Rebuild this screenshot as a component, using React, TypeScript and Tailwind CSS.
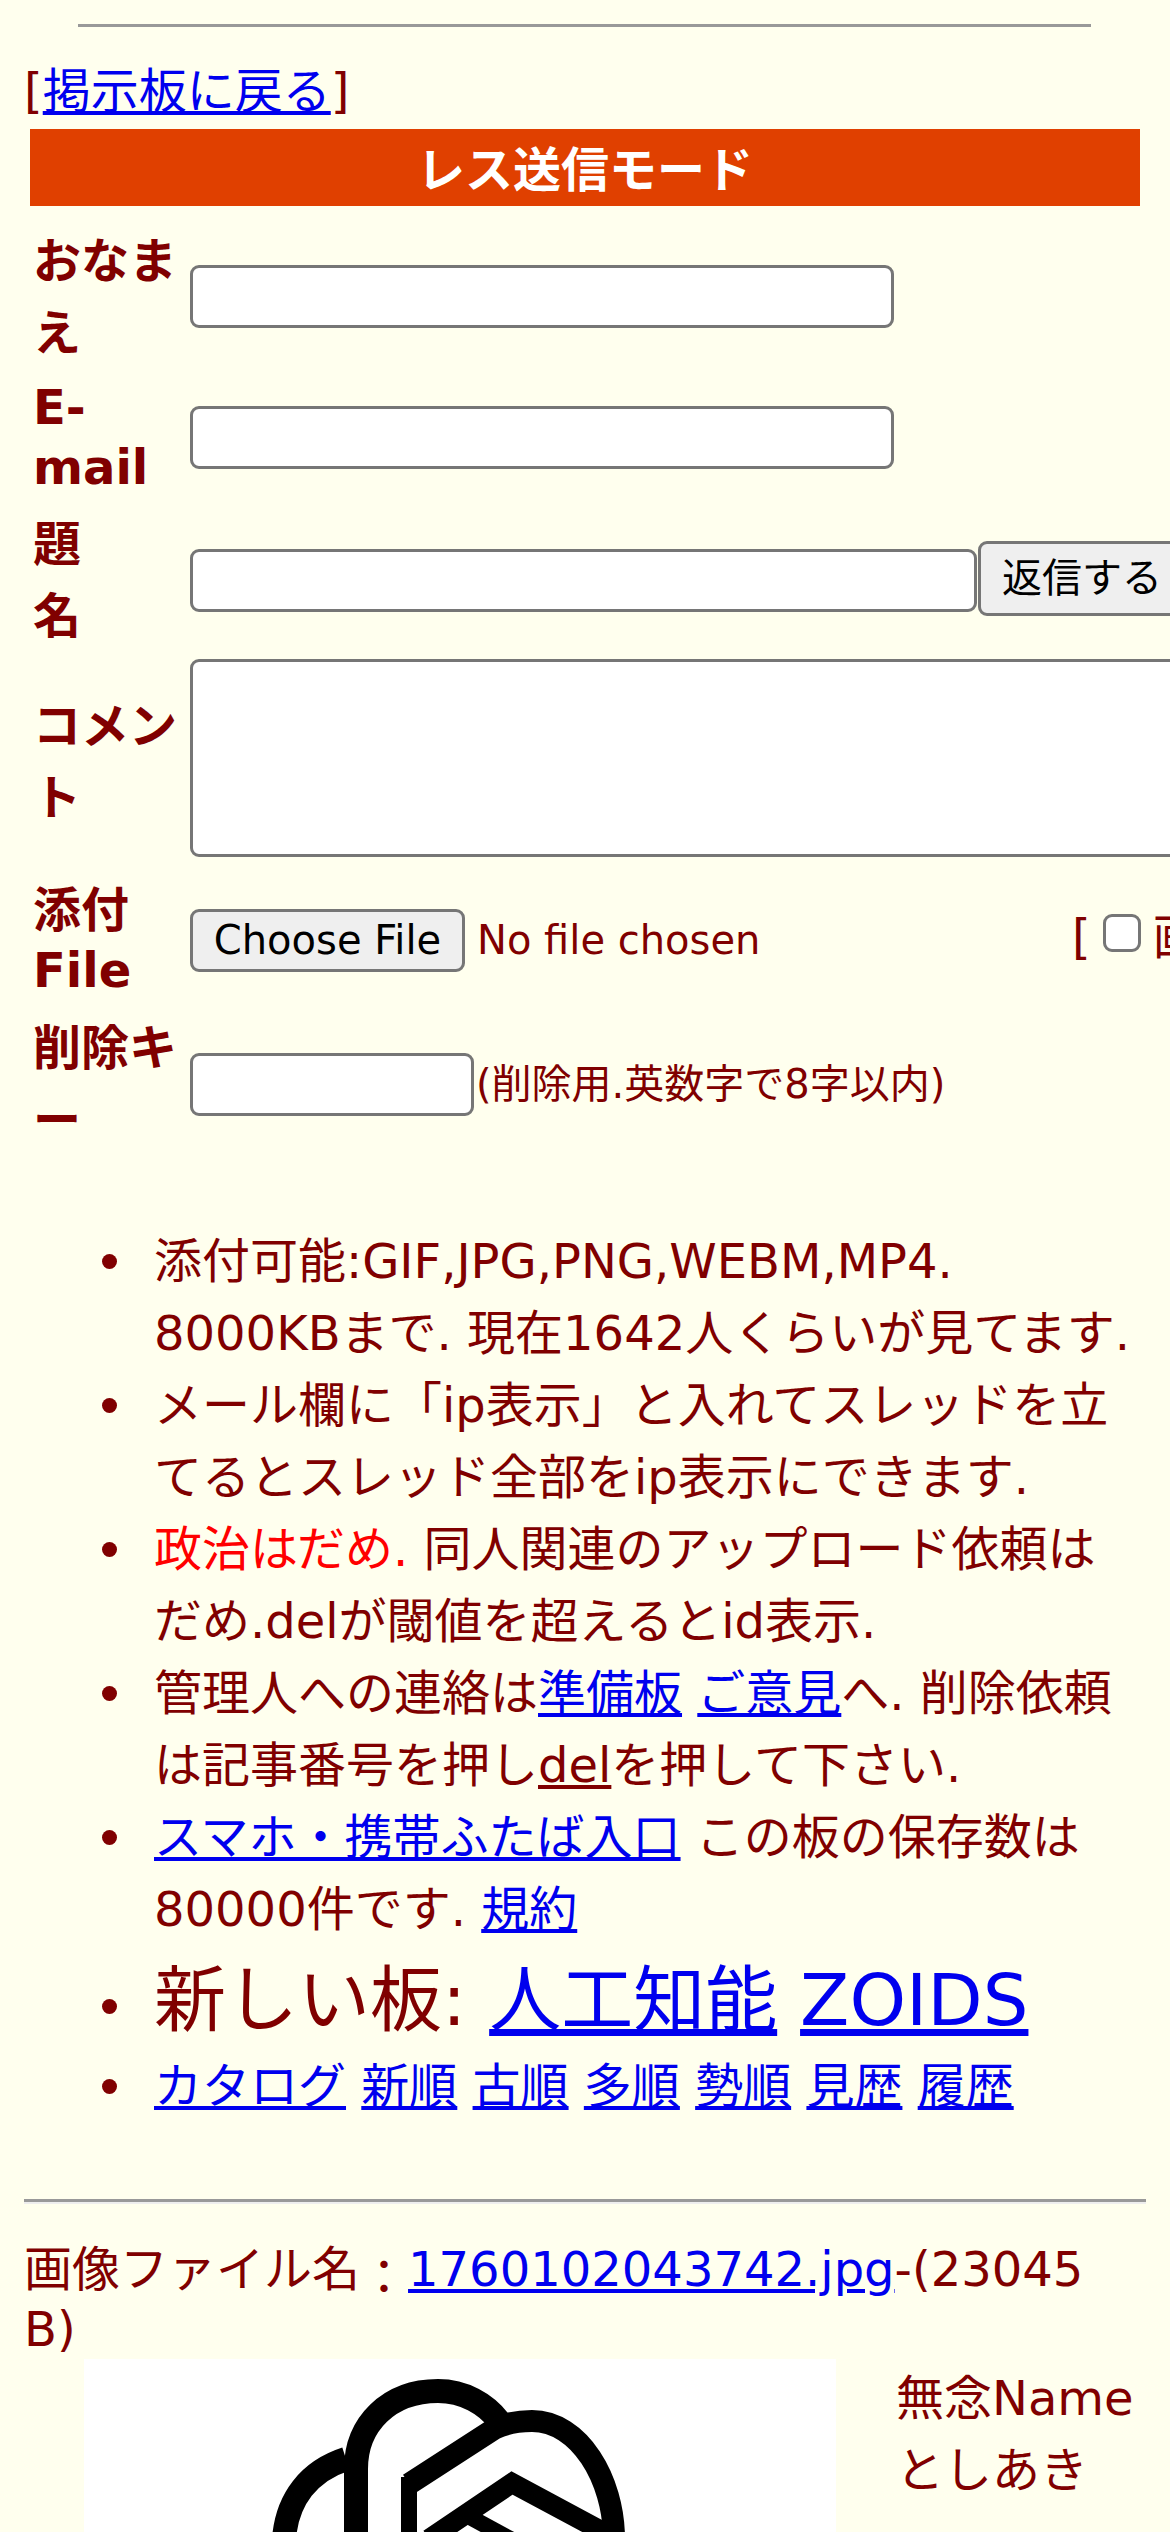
const font = { fontFamily: '"DejaVu Sans","Noto Sans CJK JP",sans-serif' };

function Row({ label, h, children }: { label: React.ReactNode; h: string; children?: React.ReactNode }) {
  return (
    <div className={`flex items-center ${h}`}>
      <div className="w-[160px] shrink-0 pl-[3px] font-bold break-all">{label}</div>
      {children}
    </div>
  );
}

const inputCls = "block h-[63px] rounded-[9px] border-[3px] border-[#767676] bg-white shrink-0";

function A({ children }: { children: React.ReactNode }) {
  return <a className="text-[#0000ee] underline">{children}</a>;
}

function Li({ children, className = "", dot = "mt-[29px]" }: { children: React.ReactNode; className?: string; dot?: string }) {
  return (
    <li className={`flex ${className}`}>
      <span className={`block w-[15px] h-[15px] rounded-full bg-[#800000] shrink-0 ml-[102px] mr-[37px] ${dot}`} />
      <div className="min-w-0">{children}</div>
    </li>
  );
}

export default function App() {
  return (
    <div className="w-[1170px] h-[2532px] overflow-hidden bg-[#ffffee] text-[#800000] text-[48px]" style={font}>
      <div className="pt-[24px] pl-[78px]">
        <div className="w-[1013px] h-[3px] bg-[#999999]" />
      </div>
      <div className="mt-[28px] pl-[24px] h-[74px] leading-[72px]">[<A>掲示板に戻る</A>]</div>
      <div className="ml-[30px] w-[1110px] h-[77px] bg-[#e04000] text-white font-bold text-center leading-[83px]">レス送信モード</div>
      <div className="ml-[30px] mt-[18px] w-[1200px]">
        <Row h="h-[144px]" label={<div className="leading-[72px] mt-[2px]">おなま<br />え</div>}>
          <div className={`${inputCls} w-[704px]`} />
        </Row>
        <Row h="h-[140px] -mt-[1px]" label={<div className="leading-[60px]">E-<br />mail</div>}>
          <div className={`${inputCls} w-[704px]`} />
        </Row>
        <Row h="h-[148px] -mt-[1px]" label={<div className="leading-[72px]">題<br />名</div>}>
          <div className={`${inputCls} w-[787px]`} />
          <div className="h-[75px] w-[300px] -mt-[4px] ml-[1px] rounded-[9px] border-[3px] border-[#767676] bg-[#efefef] text-black text-[40px] leading-[69px] pl-[21px] shrink-0">返信する</div>
        </Row>
        <Row h="h-[198px] mt-[5px]" label={<div className="leading-[72px] mt-[8px]">コメン<br />ト</div>}>
          <div className="h-[198px] w-[1100px] rounded-[9px] border-[3px] border-[#767676] bg-white shrink-0" />
        </Row>
        <Row h="h-[144px] mt-[11px]" label={<div className="leading-[60px]">添付<br />File</div>}>
          <div className="flex items-center w-[882px] shrink-0 text-[40px]">
            <div className="h-[63px] w-[275px] rounded-[9px] border-[3px] border-[#767676] bg-[#efefef] text-black leading-[57px] text-center shrink-0">Choose File</div>
            <div className="ml-[12px]">No file chosen</div>
          </div>
          <div className="flex items-center whitespace-nowrap -mt-[6px]">
            <span>[</span>
            <span className="ml-[12px] block w-[38px] h-[38px] -mt-[8px] rounded-[9px] border-[3px] border-[#767676] bg-white" />
            <span className="ml-[12px]">画</span>
          </div>
        </Row>
        <Row h="h-[144px]" label={<div className="leading-[72px]">削除キ<br />ー</div>}>
          <div className={`${inputCls} w-[284px]`} />
          <span className="ml-[2px] text-[40px] whitespace-nowrap">(削除用.英数字で8字以内)</span>
        </Row>
      </div>
      <ul className="mt-[69px] w-[1140px] leading-[72px]">
        <Li>添付可能:GIF,JPG,PNG,WEBM,MP4. 8000KBまで. 現在1642人くらいが見てます.</Li>
        <Li>メール欄に「ip表示」と入れてスレッドを立てるとスレッド全部をip表示にできます.</Li>
        <Li><span className="text-[#ff0000]">政治はだめ.</span> 同人関連のアップロード依頼はだめ.delが閾値を超えるとid表示.</Li>
        <Li>管理人への連絡は<A>準備板</A> <A>ご意見</A>へ. 削除依頼は記事番号を押し<span className="underline">del</span>を押して下さい.</Li>
        <Li><A>スマホ・携帯ふたば入口</A> この板の保存数は80000件です. <A>規約</A></Li>
        <Li className="text-[72px] leading-[100px] mt-[5px]" dot="mt-[49px]">新しい板: <A>人工知能</A> <A>ZOIDS</A></Li>
        <Li><A>カタログ</A> <A>新順</A> <A>古順</A> <A>多順</A> <A>勢順</A> <A>見歴</A> <A>履歴</A></Li>
      </ul>
      <div className="mt-[77px] mx-[24px] h-[5px] border-t-[3px] border-b-[2px] border-t-[#999999] border-b-[#eeeeee]" />
      <div className="mt-[35px] mx-[24px] leading-[60px] break-all">画像ファイル名<span className="inline-block translate-y-[8px]">：</span><A>1760102043742.jpg</A>-(23045 B)</div>
      <div className="flex">
        <div className="ml-[84px] w-[752px] h-[300px] bg-white shrink-0">
          <svg viewBox="0 0 752 180" className="block w-[752px] h-[180px]" fill="none" stroke="#000">
            <path strokeWidth="24" d="M272 180L272 110C272 65 305 32 354 32C380 32 402 45 415 62" />
            <path strokeWidth="22" d="M530 180C530 120 495 62 448 62C430 62 420 65 410 70L325 125" />
            <path strokeWidth="16" d="M325 118L325 180" />
            <path strokeWidth="24" d="M200 180C203 140 225 112 262 100" />
            <path strokeWidth="20" d="M345 180L428 124L525 176" />
            <path strokeWidth="16" d="M384 157L430 182" />
          </svg>
        </div>
        <div className="ml-[60px] mt-[3px] leading-[72px]">無念Name<br />としあき</div>
      </div>
    </div>
  );
}
